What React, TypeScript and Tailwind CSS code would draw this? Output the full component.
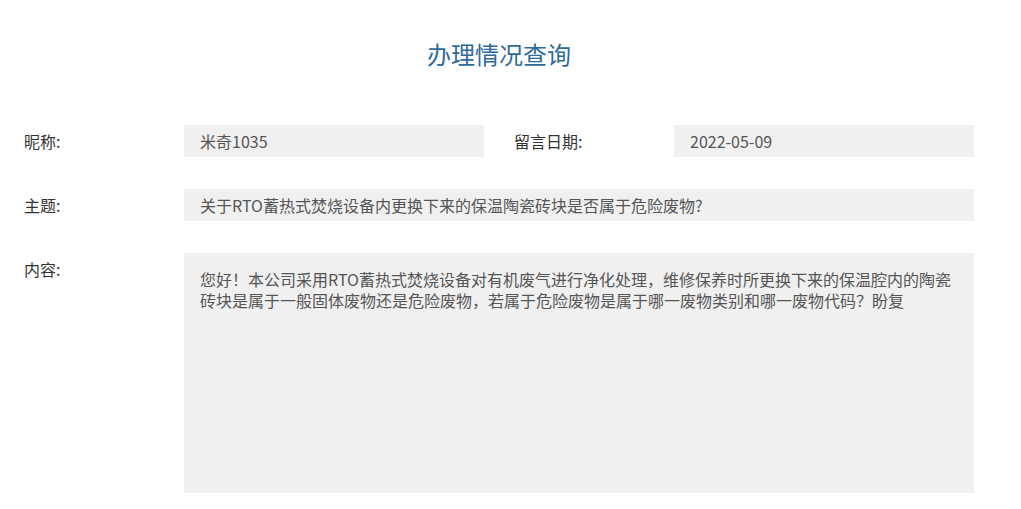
const font = {
  fontFamily: '"Microsoft YaHei", "Noto Sans CJK SC", "Noto Sans", sans-serif',
}

function Label({ children }: { children: React.ReactNode }) {
  return <div className="w-[160px] shrink-0 text-[16px] leading-[32px] text-[#333]">{children}</div>
}

function Field({ value, className = "" }: { value: string; className?: string }) {
  return (
    <div className={`h-[32px] bg-[#f0f0f0] px-4 text-[16px] leading-[32px] text-[#555] ${className}`}>
      {value}
    </div>
  )
}

export default function App() {
  return (
    <div className="min-h-[509px] w-[1021px] bg-white" style={font}>
      <div className="ml-6 w-[950px] pt-[38px]">
        <h1 className="text-center text-[24px] leading-[32px] font-normal text-[#2f6a9b]">办理情况查询</h1>

        <div className="mt-[55px] flex flex-col gap-8">
          <div className="flex items-start">
            <Label>昵称:</Label>
            <Field value="米奇1035" className="w-[300px]" />
            <div className="ml-[30px]">
              <Label>留言日期:</Label>
            </div>
            <Field value="2022-05-09" className="w-[300px]" />
          </div>

          <div className="flex items-start">
            <Label>主题:</Label>
            <Field value="关于RTO蓄热式焚烧设备内更换下来的保温陶瓷砖块是否属于危险废物?" className="w-[790px]" />
          </div>

          <div className="flex items-start">
            <Label>内容:</Label>
            <div className="h-[240px] w-[790px] bg-[#f0f0f0] px-4 pt-4 text-[16px] leading-[21px] text-[#555]">
              您好！本公司采用RTO蓄热式焚烧设备对有机废气进行净化处理，维修保养时所更换下来的保温腔内的陶瓷砖块是属于一般固体废物还是危险废物，若属于危险废物是属于哪一废物类别和哪一废物代码？盼复
            </div>
          </div>
        </div>
      </div>
    </div>
  )
}
